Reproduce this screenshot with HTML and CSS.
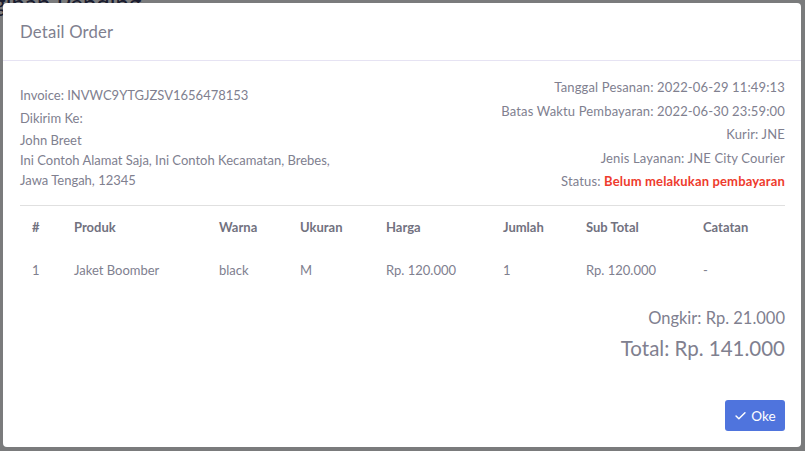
FILE: index.html
```html
<!DOCTYPE html>
<html lang="id">
<head>
<meta charset="utf-8">
<title>Detail Order</title>
<link rel="stylesheet" href="styles.css">
</head>
<body>
<div class="page">
  <h1 class="page-title">Tagihan Pending</h1>
</div>
<div class="overlay">
  <div class="modal">
    <div class="modal-header">
      <h5 class="modal-title">Detail Order</h5>
    </div>
    <div class="modal-body">
      <div class="info">
        <div class="info-left">
          <p class="line">Invoice: INVWC9YTGJZSV1656478153</p>
          <p class="line">Dikirim Ke:</p>
          <p class="address">John Breet<br>Ini Contoh Alamat Saja, Ini Contoh Kecamatan, Brebes,<br>Jawa Tengah, 12345</p>
        </div>
        <div class="info-right">
          <p class="line">Tanggal Pesanan: 2022-06-29 11:49:13</p>
          <p class="line">Batas Waktu Pembayaran: 2022-06-30 23:59:00</p>
          <p class="line">Kurir: JNE</p>
          <p class="line">Jenis Layanan: JNE City Courier</p>
          <p class="line">Status: <span class="status">Belum melakukan pembayaran</span></p>
        </div>
      </div>
      <hr class="divider">
      <table class="items">
        <colgroup>
          <col class="c-no"><col class="c-prod"><col class="c-warna"><col class="c-ukuran"><col class="c-harga"><col class="c-jumlah"><col class="c-sub"><col class="c-cat">
        </colgroup>
        <thead>
          <tr><th>#</th><th>Produk</th><th>Warna</th><th>Ukuran</th><th>Harga</th><th>Jumlah</th><th>Sub Total</th><th>Catatan</th></tr>
        </thead>
        <tbody>
          <tr><td>1</td><td>Jaket Boomber</td><td>black</td><td>M</td><td>Rp. 120.000</td><td>1</td><td>Rp. 120.000</td><td>-</td></tr>
        </tbody>
      </table>
      <div class="totals">
        <p class="ongkir">Ongkir: Rp. 21.000</p>
        <p class="total">Total: Rp. 141.000</p>
      </div>
    </div>
    <div class="modal-footer">
      <button class="btn-ok" type="button">
        <svg class="check" viewBox="0 0 16 16" width="13" height="13" aria-hidden="true"><path d="M2.5 8.5 L6 12 L13.5 4.5" fill="none" stroke="#fff" stroke-width="1.8" stroke-linecap="round" stroke-linejoin="round"/></svg>
        <span>Oke</span>
      </button>
    </div>
  </div>
</div>
</body>
</html>
```
FILE: styles.css
```css
* { box-sizing: border-box; }
html, body { margin: 0; padding: 0; }
body {
  width: 805px;
  height: 451px;
  overflow: hidden;
  font-family: "Lato", "Open Sans", sans-serif;
  background: #f4f6f9;
}
.page { padding: 0; }
.page-title {
  margin: -12px 0 0 -30px;
  font-size: 24px;
  font-weight: 400;
  color: #34395e;
  white-space: nowrap;
}
.overlay {
  position: fixed;
  inset: 0;
  background: rgba(0, 0, 0, 0.5);
  padding: 3px 4px 4px 3px;
}
.modal {
  background: #fff;
  border-radius: 4px;
  height: 444px;
  display: flex;
  flex-direction: column;
  color: #80808f;
}
.modal-header {
  height: 58px;
  flex: none;
  display: flex;
  align-items: center;
  padding: 0 17px;
  border-bottom: 1px solid #e6e3f3;
}
.modal-title {
  margin: 0;
  font-size: 16.7px;
  font-weight: 400;
  color: #80808f;
  letter-spacing: 0.2px;
}
.modal-body {
  padding: 15px 16px 0 17px;
  font-size: 13px;
}
.info {
  display: flex;
  justify-content: space-between;
}
.info p { margin: 0; }
.info-left { padding-top: 8px; }
.info-left .line { line-height: 23px; }
.info-left .address { line-height: 20px; }
.info-right { text-align: right; letter-spacing: 0.15px; }
.info-right .line { line-height: 23.5px; }
.status { color: #ee3b2d; font-weight: 700; }
.divider {
  margin: 11px 0 0 0;
  border: 0;
  border-top: 1px solid #e0e0e0;
}
.items {
  width: 100%;
  table-layout: fixed;
  border-collapse: collapse;
  font-size: 13px;
}
.c-no { width: 42px; }
.c-prod { width: 145px; }
.c-warna { width: 81px; }
.c-ukuran { width: 86px; }
.c-harga { width: 117px; }
.c-jumlah { width: 83px; }
.c-sub { width: 117px; }
.c-cat { width: auto; }
.items th, .items td {
  text-align: left;
  padding: 0 12px;
  white-space: nowrap;
}
.items th {
  height: 42px;
  font-weight: 700;
  color: #72727f;
}
.items td {
  height: 44px;
  color: #80808f;
}
.totals {
  text-align: right;
  padding-top: 14px;
}
.totals p { margin: 0; }
.ongkir { font-size: 16.5px; line-height: 24px; }
.total { font-size: 20.5px; line-height: 36px; }
.modal-footer {
  margin-top: auto;
  display: flex;
  justify-content: flex-end;
  padding: 0 16px 16px 0;
}
.btn-ok {
  width: 60px;
  height: 31px;
  border: 0;
  border-radius: 3px;
  background: #4f74dd;
  color: #fff;
  font-family: inherit;
  font-size: 13.5px;
  display: flex;
  align-items: center;
  justify-content: center;
  gap: 4px;
  padding: 0;
}
.check { display: block; }
```
